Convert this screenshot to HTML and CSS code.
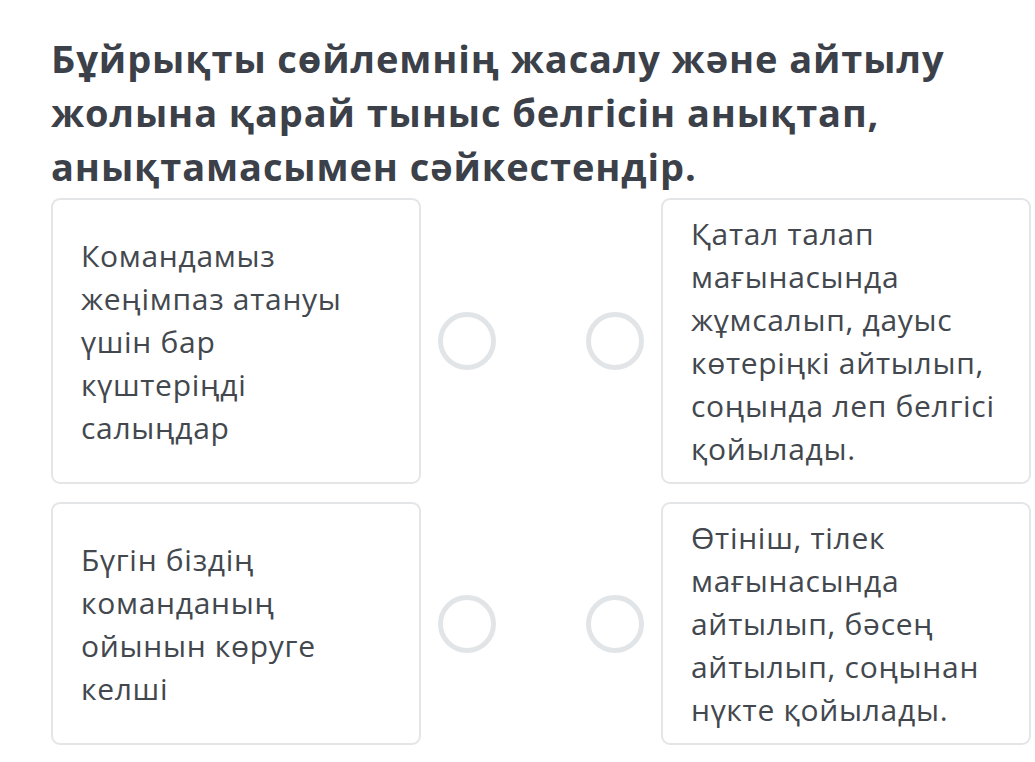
FILE: index.html
```html
<!DOCTYPE html>
<html lang="kk">
<head>
<meta charset="utf-8">
<link rel="stylesheet" href="styles.css">
</head>
<body>
<div class="page">
  <h1 class="title">Бұйрықты сөйлемнің жасалу және айтылу жолына қарай тыныс белгісін анықтап, анықтамасымен сәйкестендір.</h1>
  <div class="match">
    <div class="card"><p>Командамыз жеңімпаз атануы үшін бар күштеріңді салыңдар</p></div>
    <div class="dots"><span class="dot"></span><span class="dot"></span></div>
    <div class="card"><p>Қатал талап мағынасында жұмсалып, дауыс көтеріңкі айтылып, соңында леп белгісі қойылады.</p></div>

    <div class="card"><p>Бүгін біздің команданың ойынын көруге келші</p></div>
    <div class="dots"><span class="dot"></span><span class="dot"></span></div>
    <div class="card"><p>Өтініш, тілек мағынасында айтылып, бәсең айтылып, соңынан нүкте қойылады.</p></div>
  </div>
</div>
</body>
</html>
```
FILE: styles.css
```css
html, body {
  margin: 0;
  padding: 0;
  background: #ffffff;
}
.page {
  padding: 31px 5px 0 51px;
  font-family: "Open Sans", "Noto Sans", sans-serif;
}
.title {
  margin: 0 0 5px 0;
  font-size: 38px;
  line-height: 54px;
  font-weight: 700;
  letter-spacing: 0.9px;
  color: #3b4049;
  width: 970px;
}
.match {
  display: grid;
  grid-template-columns: 370px 240px 370px;
  row-gap: 18px;
}
.card {
  box-sizing: border-box;
  border: 2px solid #e3e5e7;
  border-radius: 9px;
  padding: 12px 33px 12px 28px;
  display: flex;
  align-items: center;
  min-height: 242px;
}
.card p {
  margin: 0;
  font-size: 30px;
  line-height: 43px;
  letter-spacing: 0.7px;
  color: #43484e;
}
.dots {
  display: flex;
  align-items: center;
  justify-content: space-between;
  padding: 0 17px 0 17px;
}
.dot {
  box-sizing: border-box;
  width: 58px;
  height: 58px;
  border-radius: 50%;
  border: 5px solid #e2e5e8;
}
```
